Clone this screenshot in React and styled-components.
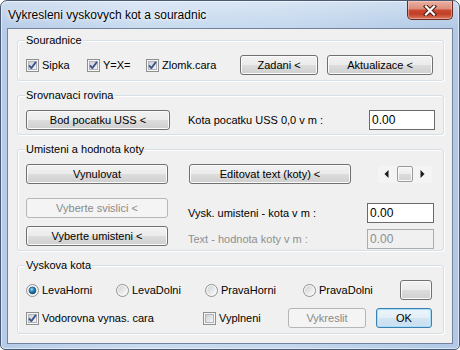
import React from "react";
import styled, { createGlobalStyle } from "styled-components";

const GlobalStyle = createGlobalStyle`
  *, *::before, *::after { box-sizing: border-box; }
  html, body { margin: 0; padding: 0; background: #ffffff; }
  body {
    font-family: "Liberation Sans", Arial, sans-serif;
    font-size: 11px;
    color: #000;
  }
`;

const Window = styled.div`
  width: 460px;
  height: 350px;
  display: flex;
  flex-direction: column;
  border: 1px solid #4a5a72;
  border-radius: 7px 7px 5px 5px;
  background:
    linear-gradient(180deg, rgba(255,255,255,0.35) 0px, rgba(255,255,255,0) 28px),
    linear-gradient(90deg, #b5cbe7 0%, #c9dbf0 30%, #c4d8ee 60%, #b1c9e6 100%);
  box-shadow: inset 0 0 0 1px rgba(255,255,255,0.55);
  overflow: hidden;
`;

const TitleBar = styled.div`
  height: 27px;
  flex: none;
  display: flex;
  align-items: flex-start;
  justify-content: space-between;
  padding: 0 6px 0 7px;
`;

const Title = styled.div`
  padding-top: 7px;
  font-size: 12px;
  line-height: 15px;
  color: #000;
  white-space: nowrap;
  text-shadow: 0 0 5px rgba(255,255,255,0.9), 0 0 2px rgba(255,255,255,0.9);
`;

const CloseButton = styled.div`
  width: 46px;
  height: 19px;
  display: flex;
  align-items: center;
  justify-content: center;
  border: 1px solid #6a2a1f;
  border-top: none;
  border-radius: 0 0 5px 5px;
  background: linear-gradient(180deg, #eab0a2 0%, #dd8f7c 42%, #c94a31 52%, #c13f26 72%, #d9775e 100%);
  box-shadow: inset 0 0 0 1px rgba(255,220,210,0.45);
`;

const Client = styled.div`
  flex: 1;
  margin: 0 6px 5px 6px;
  border: 1px solid #72839b;
  background: #f0f0f0;
  display: flex;
  flex-direction: column;
  padding: 11px 8px 0 9px;
`;

const GroupBox = styled.div`
  position: relative;
  flex: none;
  height: ${(p) => p.$h}px;
  margin-top: ${(p) => p.$mt || 0}px;
  border: 1px solid #d5dfe5;
  border-radius: 3px;
  box-shadow: inset 1px 1px 0 #ffffff, 1px 1px 0 #ffffff;
  padding: ${(p) => p.$pad};
`;

const Legend = styled.span`
  position: absolute;
  top: -7px;
  left: 7px;
  padding: 0 1px;
  background: #f0f0f0;
  font-size: 11px;
  line-height: 13px;
  white-space: nowrap;
`;

const Row = styled.div`
  display: flex;
  align-items: center;
  height: 20px;
  margin-top: ${(p) => p.$mt || 0}px;
`;

const FieldRow = styled(Row)`
  justify-content: space-between;
`;

const Split = styled.div`
  display: grid;
  grid-template-columns: 142px 1fr;
  column-gap: 20px;
`;

const Stack = styled.div`
  display: flex;
  flex-direction: column;
`;

const Label = styled.span`
  font-size: 11px;
  line-height: 13px;
  white-space: nowrap;
  margin-left: ${(p) => p.$ml || 0}px;
  color: ${(p) => (p.$disabled ? "#8f8f8f" : "#000")};
`;

const Button = styled.button`
  flex: none;
  width: ${(p) => p.$w}px;
  height: 20px;
  margin: ${(p) => p.$mt || 0}px 0 0 ${(p) => p.$ml || 0}px;
  padding: 0;
  font-family: "Liberation Sans", Arial, sans-serif;
  font-size: 11px;
  line-height: 18px;
  white-space: nowrap;
  color: ${(p) => (p.disabled ? "#8a8a8a" : "#000")};
  border: 1px solid ${(p) => (p.disabled ? "#b3b7ba" : p.$default ? "#3c7fb1" : "#707070")};
  border-radius: 3px;
  background: ${(p) =>
    p.disabled
      ? "#f4f4f4"
      : p.$default
      ? "linear-gradient(180deg, #eef6fb 0%, #e3eef7 50%, #d3e5f3 50%, #c6dcef 100%)"
      : "linear-gradient(180deg, #f2f2f2 0%, #ebebeb 50%, #dddddd 50%, #cfcfcf 100%)"};
  box-shadow: ${(p) =>
    p.disabled
      ? "none"
      : p.$default
      ? "inset 0 0 0 1px #a9dcf6, inset 0 0 3px 1px #d6f0fd"
      : "inset 0 0 0 1px #fbfbfb"};
`;

const TextBox = styled.div`
  flex: none;
  width: ${(p) => p.$w}px;
  height: 20px;
  padding-left: 2px;
  font-size: 12px;
  line-height: 18px;
  border: 1px solid ${(p) => (p.$disabled ? "#a9adb1" : "#6a6a6a")};
  background: ${(p) => (p.$disabled ? "#f0f0f0" : "#ffffff")};
  color: ${(p) => (p.$disabled ? "#8d8d8d" : "#000")};
`;

const OptionItem = styled.div`
  flex: none;
  width: ${(p) => p.$w}px;
  display: flex;
  align-items: center;
  gap: 3px;
  font-size: 11px;
  line-height: 13px;
  white-space: nowrap;
  svg { flex: none; }
`;

const SpinBar = styled.div`
  flex: none;
  display: flex;
  align-items: center;
  width: 54px;
  height: 17px;
  margin-left: 27px;
  background: #f4f4f4;
`;

const SpinArrow = styled.div`
  width: ${(p) => p.$w}px;
  height: 17px;
  display: flex;
  align-items: center;
  justify-content: center;
`;

const SpinThumb = styled.div`
  width: 16px;
  height: 16px;
  margin-left: 3px;
  border: 1px solid #9a9a9a;
  border-radius: 2px;
  background: linear-gradient(180deg, #f6f6f6 0%, #ececec 50%, #dcdcdc 51%, #d2d2d2 100%);
  box-shadow: inset 0 0 0 1px #fafafa;
`;

const CheckBox = ({ checked }) => (
  <svg width="13" height="13" viewBox="0 0 13 13">
    <defs>
      <linearGradient id="cbFill" x1="0" y1="0" x2="1" y2="1">
        <stop offset="0" stopColor="#c9cdd3" />
        <stop offset="1" stopColor="#f7f7f8" />
      </linearGradient>
    </defs>
    <rect x="0.5" y="0.5" width="12" height="12" fill="#f6f6f6" stroke="#8e8f8f" />
    <rect x="2.5" y="2.5" width="8" height="8" fill="url(#cbFill)" stroke="#b2b6bc" />
    {checked && (
      <path d="M3 6.4 L5.3 9.1 L10 2.9" fill="none" stroke="#3f5589" strokeWidth="1.8" strokeLinejoin="round" />
    )}
  </svg>
);

const Radio = ({ checked }) => (
  <svg width="13" height="13" viewBox="0 0 13 13">
    <defs>
      <linearGradient id="rbFill" x1="0" y1="0" x2="1" y2="1">
        <stop offset="0" stopColor="#cfd1d3" />
        <stop offset="1" stopColor="#fbfbfb" />
      </linearGradient>
      <radialGradient id="rbDot" cx="0.38" cy="0.32" r="0.75">
        <stop offset="0" stopColor="#9be0f7" />
        <stop offset="0.45" stopColor="#2a86bf" />
        <stop offset="1" stopColor="#0d3c66" />
      </radialGradient>
    </defs>
    <circle cx="6.5" cy="6.5" r="6" fill="#f7f7f7" stroke="#8e8f8f" />
    <circle cx="6.5" cy="6.5" r="4.4" fill="url(#rbFill)" />
    {checked && <circle cx="6.5" cy="6.5" r="3.4" fill="url(#rbDot)" stroke="#1b4870" strokeWidth="0.6" />}
  </svg>
);

const ArrowGlyph = ({ dir }) => (
  <svg width="5" height="8" viewBox="0 0 5 8">
    {dir === "left" ? <path d="M4.5 0 L0.5 4 L4.5 8 Z" fill="#1a1a1a" /> : <path d="M0.5 0 L4.5 4 L0.5 8 Z" fill="#1a1a1a" />}
  </svg>
);

const CloseGlyph = () => (
  <svg width="14" height="11" viewBox="0 0 14 11">
    <path d="M3 1.5 L11 9.5 M11 1.5 L3 9.5" stroke="#4a1b12" strokeWidth="4.2" strokeLinecap="square" />
    <path d="M3 1.5 L11 9.5 M11 1.5 L3 9.5" stroke="#ffffff" strokeWidth="2.2" strokeLinecap="square" />
  </svg>
);

export default function App() {
  return (
    <>
      <GlobalStyle />
      <Window>
        <TitleBar>
          <Title>Vykresleni vyskovych kot a souradnic</Title>
          <CloseButton>
            <CloseGlyph />
          </CloseButton>
        </TitleBar>
        <Client>
          <GroupBox $h={41} $pad="14px 9px 0 8px">
            <Legend>Souradnice</Legend>
            <Row>
              <OptionItem $w={61}>
                <CheckBox checked />
                Sipka
              </OptionItem>
              <OptionItem $w={59}>
                <CheckBox checked />
                Y=X=
              </OptionItem>
              <OptionItem $w={94}>
                <CheckBox checked />
                Zlomk.cara
              </OptionItem>
              <Button $w={78}>Zadani &lt;</Button>
              <Button $w={106} $ml={9}>
                Aktualizace &lt;
              </Button>
            </Row>
          </GroupBox>

          <GroupBox $h={40} $mt={14} $pad="14px 8px 0 8px">
            <Legend>Srovnavaci rovina</Legend>
            <FieldRow>
              <Button $w={144}>Bod pocatku USS &lt;</Button>
              <Label $ml={18} style={{ flex: 1 }}>
                Kota pocatku USS 0,0 v m :
              </Label>
              <TextBox $w={66}>0.00</TextBox>
            </FieldRow>
          </GroupBox>

          <GroupBox $h={102} $mt={14} $pad="14px 9px 0 8px">
            <Legend>Umisteni a hodnota koty</Legend>
            <Split>
              <Stack>
                <Button $w={142}>Vynulovat</Button>
                <Button $w={142} $mt={14} disabled>
                  Vyberte svislici &lt;
                </Button>
                <Button $w={142} $mt={8}>
                  Vyberte umisteni &lt;
                </Button>
              </Stack>
              <Stack>
                <Row>
                  <Button $w={162} $ml={1}>
                    Editovat text (koty) &lt;
                  </Button>
                  <SpinBar>
                    <SpinArrow $w={16}>
                      <ArrowGlyph dir="left" />
                    </SpinArrow>
                    <SpinThumb />
                    <SpinArrow $w={19}>
                      <ArrowGlyph dir="right" />
                    </SpinArrow>
                  </SpinBar>
                </Row>
                <FieldRow $mt={19}>
                  <Label>Vysk. umisteni - kota v m :</Label>
                  <TextBox $w={67}>0.00</TextBox>
                </FieldRow>
                <FieldRow $mt={6}>
                  <Label $disabled>Text - hodnota koty v m :</Label>
                  <TextBox $w={67} $disabled>
                    0.00
                  </TextBox>
                </FieldRow>
              </Stack>
            </Split>
          </GroupBox>

          <GroupBox $h={69} $mt={14} $pad="14px 10px 0 8px">
            <Legend>Vyskova kota</Legend>
            <Row>
              <OptionItem $w={90}>
                <Radio checked />
                LevaHorni
              </OptionItem>
              <OptionItem $w={89}>
                <Radio />
                LevaDolni
              </OptionItem>
              <OptionItem $w={98}>
                <Radio />
                PravaHorni
              </OptionItem>
              <OptionItem $w={97}>
                <Radio />
                PravaDolni
              </OptionItem>
              <Button $w={32} />
            </Row>
            <Row $mt={8}>
              <OptionItem $w={177}>
                <CheckBox checked />
                Vodorovna vynas. cara
              </OptionItem>
              <OptionItem $w={85}>
                <CheckBox />
                Vyplneni
              </OptionItem>
              <Button $w={78} disabled>
                Vykreslit
              </Button>
              <Button $w={56} $ml={10} $default>
                OK
              </Button>
            </Row>
          </GroupBox>
        </Client>
      </Window>
    </>
  );
}
